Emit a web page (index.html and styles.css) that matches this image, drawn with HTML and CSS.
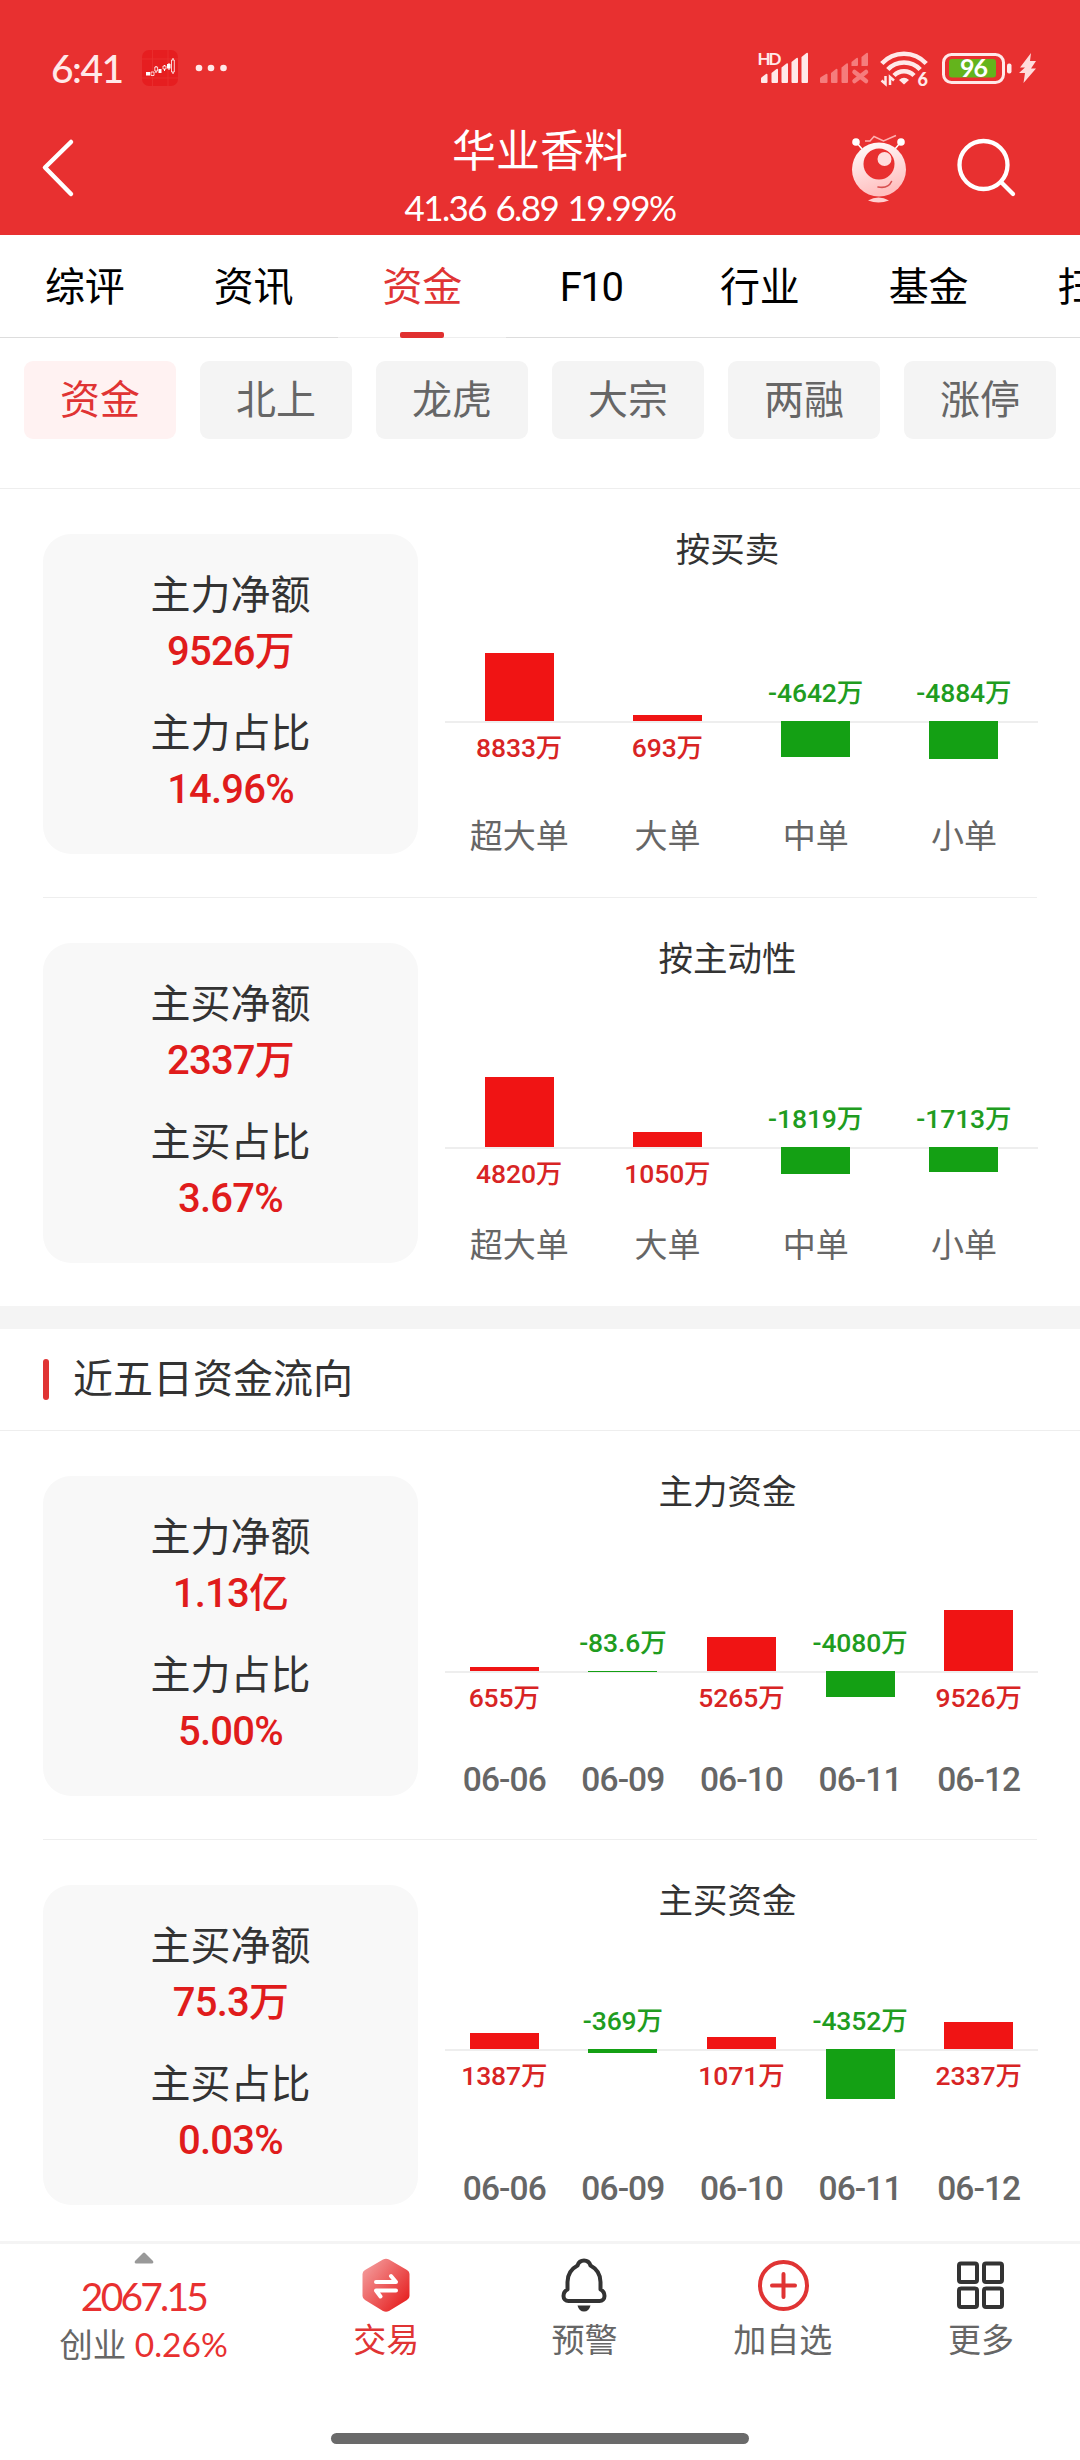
FILE: index.html
```html
<!DOCTYPE html>
<html lang="zh-CN">
<head>
  <meta charset="UTF-8">
  <meta name="viewport" content="width=device-width, initial-scale=1.0">
  <title>华业香料 - 资金</title>
  <link rel="stylesheet" href="styles.css">
</head>
<body>
  <header class="header">
    <div class="status">
      <span class="time">6:41</span>
      <svg class="app-icon" width="36" height="36" viewBox="0 0 36 36">
        <rect width="36" height="36" rx="7" fill="#e61e20"/>
        <path d="M10.500 0v36M26 0v36M0 9h36M0 28h36" stroke="#ea3030" stroke-width=".8"/>
        <path d="M14 16v7M22.500 15v6M27 13v7M31 8v16" stroke="#fff" stroke-width="1"/>
        <path d="M4 22h4v3.500H4zM16.500 19h3v4h-3zM25 14h3.500v4.500H25z" fill="#fff"/>
        <path d="M9 22h3v3.500H9zM12.800 17h2.800v4h-2.800zM21 16h3v3h-3zM29.500 10h2.800v12h-2.800z" fill="#e61e20" stroke="#fff" stroke-width=".8"/>
      </svg>
      <svg class="dots" width="32" height="8" viewBox="0 0 32 8" fill="#ffe9e9">
        <circle cx="4" cy="4" r="3.300"/><circle cx="16" cy="4" r="3.300"/><circle cx="28.500" cy="4" r="3.300"/>
      </svg>
      <svg class="status-icons" width="284" height="44" viewBox="0 0 284 44">
        <g fill="#ffe9e9">
          <text class="hd" x="1.500" y="19" textLength="24">HD</text>
          <path d="M5 36v-3.500q0-1 1-1.500l4-3q1.500-1 1.500 1V36q0 1-1 1H6q-1 0-1-1zM15.500 36V27l5-4q1.500-1 1.500 1v12q0 1-1 1h-4.500q-1 0-1-1zM25.500 36V21.500l5-4q1.500-1 1.500 1V36q0 1-1 1h-4.500q-1 0-1-1zM35.500 36V16l5-4q1.500-1 1.500 1v23q0 1-1 1h-4.500q-1 0-1-1zM45.500 36V11l5-4q1.500-1 1.500 1v28q0 1-1 1h-4.500q-1 0-1-1z"/>
        </g>
        <g fill="#f57c7c">
          <path d="M64 36v-3.500q0-1 1-1.500l5-3q1.500-1 1.500 1V36q0 1-1 1H65q-1 0-1-1zM75 36V27l5-4q1.500-1 1.500 1v12q0 1-1 1H76q-1 0-1-1zM85.500 36V21.500l5-4q1.500-1 1.500 1V36q0 1-1 1H86.500q-1 0-1-1zM95.500 20V16l5-4q1.500-1 1.500 1v6q0 1-1 1zM105.500 20V11l5-4q1.500-1 1.500 1v11q0 1-1 1z"/>
          <path d="M98.500 26l11.500 9M110 26l-11.500 9" stroke="#f57c7c" stroke-width="4.500" stroke-linecap="round"/>
        </g>
        <g fill="none" stroke="#ffe9e9" stroke-width="4.500">
          <path d="M125.800 17.500a30 30 0 0 1 44.400 0"/>
          <path d="M131.800 23.500a22 22 0 0 1 32.400 0"/>
          <path d="M138 29.500a14 14 0 0 1 20 0"/>
        </g>
        <path d="M143 34q5-4.500 10 0l-5 4.500z" fill="#ffe9e9"/>
        <path d="M129.500 30v8l-4-3.500M134 39v-8l4 3.500" fill="none" stroke="#ffe9e9" stroke-width="2.500"/>
        <text class="wifi-gen" x="161.500" y="39.500">6</text>
        <rect x="187.500" y="8.500" width="60" height="28" rx="8" fill="none" stroke="#ffe9e9" stroke-width="3"/>
        <rect x="193" y="13" width="47" height="18.500" rx="3" fill="#64b41c"/>
        <text class="battery-level" x="217.500" y="31" text-anchor="middle">96</text>
        <rect x="251" y="17.500" width="4.500" height="10" rx="2" fill="#ffe9e9"/>
        <path d="M275 7l-11 14.500h5l-6 5.500h6l-1.500 10L280 22.500h-5l5-7.500h-6z" fill="#ffdcdc"/>
      </svg>
    </div>
    <div class="title-bar">
      <svg class="back" width="40" height="64" viewBox="0 0 40 64" fill="none" stroke="#fff" stroke-width="4.500" stroke-linecap="round" stroke-linejoin="round">
        <path d="M31 7L5 32.500 31 59"/>
      </svg>
      <div class="stock">
        <h1>华业香料</h1>
        <p>41.36 6.89 19.99%</p>
      </div>
      <div class="actions">
        <svg width="60" height="72" viewBox="0 0 60 72">
          <defs>
            <linearGradient id="face" x1="0" y1="0" x2="0.300" y2="1">
              <stop offset="0" stop-color="#fff"/><stop offset="1" stop-color="#ffc0c0"/>
            </linearGradient>
          </defs>
          <path d="M16 9h5l4-4.500 9.500 4.500L47 3.500" fill="none" stroke="#ffb0b0" stroke-width="1.500"/>
          <path d="M8 11l5 6M51 11l-5 6" stroke="#fff" stroke-width="1.500"/>
          <circle cx="7" cy="10" r="3.800" fill="#fff"/><circle cx="52" cy="10" r="3.800" fill="#fff"/>
          <circle cx="30" cy="37.500" r="27" fill="url(#face)"/>
          <circle cx="30" cy="32" r="15.500" fill="#e83030"/>
          <circle cx="35.500" cy="27" r="7" fill="#ffdcdc"/>
          <path d="M29 55q10 2 13.500-5.500" fill="none" stroke="#d85050" stroke-width="1.600" stroke-linecap="round"/>
          <path d="M19 68.500q10.500-6 21 0-10.500 4-21 0z" fill="#ffd0d0"/>
        </svg>
        <svg width="64" height="64" viewBox="0 0 64 64" fill="none" stroke="#fff" stroke-width="4.300" stroke-linecap="round">
          <circle cx="29.500" cy="30" r="24"/><path d="M47 47l12 12"/>
        </svg>
      </div>
    </div>
  </header>

  <nav class="tabs">
    <a class="tab">综评</a>
    <a class="tab">资讯</a>
    <a class="tab active">资金</a>
    <a class="tab latin">F10</a>
    <a class="tab">行业</a>
    <a class="tab">基金</a>
    <a class="tab">扫雷</a>
  </nav>

  <div class="chips">
    <a class="chip active">资金</a>
    <a class="chip">北上</a>
    <a class="chip">龙虎</a>
    <a class="chip">大宗</a>
    <a class="chip">两融</a>
    <a class="chip">涨停</a>
  </div>

  <main>
    <section class="row">
      <div class="card">
        <span class="label">主力净额</span><span class="num">9526万</span>
        <span class="label">主力占比</span><span class="num">14.96%</span>
      </div>
      <div class="chart">
        <h3>按买卖</h3>
        <div class="plot">
          <div class="col up">
            <div class="above" style="height:155px"><i class="bar" style="height:68px"></i></div>
            <div class="below"><b>8833万</b></div>
          </div>
          <div class="col up">
            <div class="above" style="height:155px"><i class="bar" style="height:6px"></i></div>
            <div class="below"><b>693万</b></div>
          </div>
          <div class="col down">
            <div class="above" style="height:155px"><b>-4642万</b></div>
            <div class="below"><i class="bar" style="height:36px"></i></div>
          </div>
          <div class="col down">
            <div class="above" style="height:155px"><b>-4884万</b></div>
            <div class="below"><i class="bar" style="height:38px"></i></div>
          </div>
        </div>
        <div class="axis"><span>超大单</span><span>大单</span><span>中单</span><span>小单</span></div>
      </div>
    </section>

    <hr class="inset">

    <section class="row">
      <div class="card">
        <span class="label">主买净额</span><span class="num">2337万</span>
        <span class="label">主买占比</span><span class="num">3.67%</span>
      </div>
      <div class="chart">
        <h3>按主动性</h3>
        <div class="plot">
          <div class="col up">
            <div class="above" style="height:172px"><i class="bar" style="height:70px"></i></div>
            <div class="below"><b>4820万</b></div>
          </div>
          <div class="col up">
            <div class="above" style="height:172px"><i class="bar" style="height:15px"></i></div>
            <div class="below"><b>1050万</b></div>
          </div>
          <div class="col down">
            <div class="above" style="height:172px"><b>-1819万</b></div>
            <div class="below"><i class="bar" style="height:27px"></i></div>
          </div>
          <div class="col down">
            <div class="above" style="height:172px"><b>-1713万</b></div>
            <div class="below"><i class="bar" style="height:25px"></i></div>
          </div>
        </div>
        <div class="axis"><span>超大单</span><span>大单</span><span>中单</span><span>小单</span></div>
      </div>
    </section>

    <div class="gap"></div>
    <h2 class="section-title">近五日资金流向</h2>

    <section class="row">
      <div class="card">
        <span class="label">主力净额</span><span class="num">1.13亿</span>
        <span class="label">主力占比</span><span class="num">5.00%</span>
      </div>
      <div class="chart">
        <h3>主力资金</h3>
        <div class="plot">
          <div class="col up">
            <div class="above" style="height:163px"><i class="bar" style="height:4px"></i></div>
            <div class="below"><b>655万</b></div>
          </div>
          <div class="col down">
            <div class="above" style="height:163px"><b>-83.6万</b></div>
            <div class="below"><i class="bar" style="height:1px"></i></div>
          </div>
          <div class="col up">
            <div class="above" style="height:163px"><i class="bar" style="height:34px"></i></div>
            <div class="below"><b>5265万</b></div>
          </div>
          <div class="col down">
            <div class="above" style="height:163px"><b>-4080万</b></div>
            <div class="below"><i class="bar" style="height:26px"></i></div>
          </div>
          <div class="col up">
            <div class="above" style="height:163px"><i class="bar" style="height:61px"></i></div>
            <div class="below"><b>9526万</b></div>
          </div>
        </div>
        <div class="axis dates"><span>06-06</span><span>06-09</span><span>06-10</span><span>06-11</span><span>06-12</span></div>
      </div>
    </section>

    <hr class="inset">

    <section class="row">
      <div class="card">
        <span class="label">主买净额</span><span class="num">75.3万</span>
        <span class="label">主买占比</span><span class="num">0.03%</span>
      </div>
      <div class="chart">
        <h3>主买资金</h3>
        <div class="plot">
          <div class="col up">
            <div class="above" style="height:132px"><i class="bar" style="height:16px"></i></div>
            <div class="below"><b>1387万</b></div>
          </div>
          <div class="col down">
            <div class="above" style="height:132px"><b>-369万</b></div>
            <div class="below"><i class="bar" style="height:4px"></i></div>
          </div>
          <div class="col up">
            <div class="above" style="height:132px"><i class="bar" style="height:12px"></i></div>
            <div class="below"><b>1071万</b></div>
          </div>
          <div class="col down">
            <div class="above" style="height:132px"><b>-4352万</b></div>
            <div class="below"><i class="bar" style="height:50px"></i></div>
          </div>
          <div class="col up">
            <div class="above" style="height:132px"><i class="bar" style="height:27px"></i></div>
            <div class="below"><b>2337万</b></div>
          </div>
        </div>
        <div class="axis dates"><span>06-06</span><span>06-09</span><span>06-10</span><span>06-11</span><span>06-12</span></div>
      </div>
    </section>
  </main>

  <footer class="footer">
    <div class="toolbar">
      <div class="index">
        <svg width="20" height="12" viewBox="0 0 20 12"><path d="M9 1q1-1 2 0l8 8q1 2-1 2.500H2q-2-.5-1-2.500z" fill="#999"/></svg>
        <span class="points">2067.15</span>
        <span class="change">创业 <em>0.26%</em></span>
      </div>
      <div class="tool red">
        <svg width="56" height="56" viewBox="0 0 56 56">
          <defs>
            <linearGradient id="hex" x1="0" y1="0.100" x2="0.900" y2="0.900">
              <stop offset="0" stop-color="#f4a0a0"/><stop offset="1" stop-color="#e62020"/>
            </linearGradient>
          </defs>
          <path d="M25 2.500q3-1.500 6 0L49 13q2.500 1.500 2.500 4v22q0 2.500-2.500 4L31 54q-3 1.500-6 0L7 43q-2.500-1.500-2.500-4V17q0-2.500 2.500-4z" fill="url(#hex)"/>
          <path d="M18 25h20l-5-6M38 33.500H18l4.500 6" fill="none" stroke="#fff" stroke-width="4" stroke-linecap="round" stroke-linejoin="round"/>
        </svg>
        <span>交易</span>
      </div>
      <div class="tool">
        <svg width="56" height="56" viewBox="0 0 56 56">
          <path d="M28 3.500c-3.500 0-5.500 2-6.500 5C15 12 11.500 18 11.500 25v7.500C8.500 34 7.500 36.500 7.500 39c0 3 2 5 5 5h31c3 0 5-2 5-5 0-2.500-1-5-4-6.500V25c0-7-3.500-13-10-16.500-1-3-3-5-6.500-5z" fill="none" stroke="#333" stroke-width="4" stroke-linejoin="round"/>
          <path d="M21.500 48.500h13q-1.500 6-6.500 6t-6.500-6z" fill="#333"/>
        </svg>
        <span>预警</span>
      </div>
      <div class="tool">
        <svg width="56" height="56" viewBox="0 0 56 56" fill="none" stroke="#e03434" stroke-width="4" stroke-linecap="round">
          <circle cx="28.500" cy="28.500" r="23.500"/><path d="M17 28.500h23M28.500 17v23"/>
        </svg>
        <span>加自选</span>
      </div>
      <div class="tool">
        <svg width="56" height="56" viewBox="0 0 56 56" fill="none" stroke="#333" stroke-width="4">
          <rect x="6" y="6.500" width="18" height="18.500" rx="2"/><rect x="31" y="6.500" width="18" height="18.500" rx="2"/>
          <rect x="6" y="31.500" width="18" height="18.500" rx="2"/><rect x="31" y="31.500" width="18" height="18.500" rx="2"/>
        </svg>
        <span>更多</span>
      </div>
    </div>
    <div class="home-bar"></div>
  </footer>
</body>
</html>
```
FILE: styles.css
```css
* {
  box-sizing: border-box;
  margin: 0;
  padding: 0;
}
body {
  width: 1080px;
  height: 2460px;
  overflow: hidden;
  background: #fff;
  color: #333;
  font-family: Roboto, "Noto Sans CJK SC", sans-serif;
  display: flex;
  flex-direction: column;
}
svg {
  display: block;
  flex: none;
}
h1, h2, h3 {
  font-weight: 400;
}
em, i {
  font-style: normal;
}

/* header */
.header {
  height: 235px;
  flex: none;
  background: #e83030;
  color: #fff;
}
.status {
  height: 110px;
  padding: 26px 40px 0 51px;
  display: flex;
  align-items: center;
  color: #ffe9e9;
}
.time {
  width: 91px;
  font: 500 39px/50px Lato, sans-serif;
  letter-spacing: -1.500px;
}
.dots {
  margin-left: 17px;
}
.status-icons {
  margin-left: auto;
}
.hd {
  font: 700 17px Lato, sans-serif;
}
.wifi-gen {
  font: 900 18px Lato, sans-serif;
  fill: #ffe9e9;
}
.battery-level {
  font: 700 25px Lato, sans-serif;
  letter-spacing: -1px;
  fill: #fff;
}
.title-bar {
  height: 125px;
  padding: 0 62px 0 40px;
  display: grid;
  grid-template-columns: 230px 1fr 208px;
}
.back {
  margin-top: 25px;
}
.stock {
  text-align: center;
}
.stock h1 {
  margin-top: 15px;
  font-size: 44px;
  line-height: 54px;
}
.stock p {
  margin-top: 6px;
  font: 400 35px/44px Lato, sans-serif;
  letter-spacing: -1.600px;
  word-spacing: 2px;
}
.actions {
  display: flex;
  justify-content: flex-end;
  align-items: flex-start;
  gap: 45px;
  padding-top: 22px;
}
.actions svg + svg {
  margin-top: 3px;
}

/* tabs */
.tabs {
  height: 103px;
  flex: none;
  display: flex;
  overflow: hidden;
}
.tab {
  flex: 0 0 168.750px;
  padding: 25px 0 0 1px;
  border-bottom: 1px solid #ddd;
  color: #000;
  font-size: 40px;
  line-height: 56px;
  text-align: center;
}
.tab.latin {
  letter-spacing: -1.500px;
}
.tab.active {
  color: #e03434;
  border-color: #eee;
}
.tab.active::after {
  content: "";
  display: block;
  width: 44px;
  height: 6px;
  margin: 16px auto 0;
  border-radius: 2px;
  background: #e03030;
}
.chips {
  height: 151px;
  flex: none;
  padding: 23px 24px 0;
  border-bottom: 1px solid #eee;
  display: flex;
  gap: 24px;
}
.chip {
  width: 152px;
  height: 78px;
  border-radius: 9px;
  background: #f4f4f4;
  color: #666;
  font-size: 40px;
  line-height: 79px;
  text-align: center;
}
.chip.active {
  background: #fff2f2;
  color: #e03434;
}

/* data rows */
.row {
  padding: 45px 43px 43px;
  display: flex;
}
.row:last-child {
  padding-bottom: 36px;
}
.inset {
  height: 1px;
  margin: 0 43px;
  border: none;
  background: #eee;
}
.card {
  width: 375px;
  height: 320px;
  padding-top: 34px;
  border-radius: 28px;
  background: #f8f8f8;
  display: flex;
  flex-direction: column;
  align-items: center;
}
.card span {
  height: 56px;
  line-height: 56px;
  font-size: 40px;
}
.card .num {
  margin-bottom: 26px;
  color: #e01c1c;
  font-weight: 500;
  letter-spacing: -.8px;
}
.chart {
  flex: 1;
  height: 320px;
  display: flex;
  flex-direction: column;
}
.chart h3 {
  height: 32px;
  flex: none;
  font-size: 34.500px;
  line-height: 32px;
  text-align: center;
}
.plot, .axis {
  flex: none;
  margin: 0 -1px 0 27px;
  display: flex;
}
.plot {
  height: 251px;
}
.col {
  flex: 1;
  display: flex;
  flex-direction: column;
}
.above {
  flex: none;
  display: flex;
  flex-direction: column;
  justify-content: flex-end;
  align-items: center;
}
.below {
  border-top: 2px solid #eee;
  display: flex;
  flex-direction: column;
  align-items: center;
}
.bar {
  width: 69px;
  background: #f01414;
}
.down .bar {
  margin-top: -2px;
  background: #14a014;
}
.col b {
  height: 30px;
  font-size: 26.500px;
  font-weight: 500;
  line-height: 30px;
  letter-spacing: -.1px;
  white-space: nowrap;
}
.up b {
  margin-top: 10px;
  color: #d82424;
}
.down b {
  margin-bottom: 13px;
  color: #209c20;
}
.axis span {
  flex: 1;
  color: #666;
  font-size: 33px;
  line-height: 40px;
  text-align: center;
}
.axis.dates span {
  font-size: 33.500px;
  font-weight: 500;
  line-height: 42px;
  letter-spacing: -.9px;
}
.gap {
  height: 23px;
  background: #f4f4f4;
}
.section-title {
  height: 102px;
  padding-left: 43px;
  border-bottom: 1px solid #eee;
  display: flex;
  align-items: center;
  gap: 24px;
  font-size: 40px;
  line-height: 50px;
}
.section-title::before {
  content: "";
  width: 6px;
  height: 41px;
  border-radius: 3px;
  background: #e03434;
}

/* bottom toolbar */
.footer {
  height: 219px;
  flex: none;
  border-top: 3px solid #f4f4f4;
}
.toolbar {
  height: 188px;
  display: flex;
}
.index {
  width: 287px;
  padding-top: 8px;
  display: flex;
  flex-direction: column;
  align-items: center;
}
.points {
  margin-top: 10px;
  color: #e83030;
  font: 400 39px/44px Lato, sans-serif;
  letter-spacing: -2.800px;
}
.change {
  margin-top: 4px;
  color: #666;
  font: 400 33.500px/44px Lato, "Noto Sans CJK SC", sans-serif;
  white-space: nowrap;
}
.change em {
  color: #e83030;
}
.tool {
  flex: 1;
  padding-top: 13px;
  display: flex;
  flex-direction: column;
  align-items: center;
  color: #666;
}
.tool span {
  font-size: 33px;
  line-height: 55px;
}
.tool.red {
  color: #e03434;
}
.home-bar {
  width: 418px;
  height: 11px;
  margin: 1px auto 0;
  border-radius: 6px;
  background: #6a6a6a;
}
```
